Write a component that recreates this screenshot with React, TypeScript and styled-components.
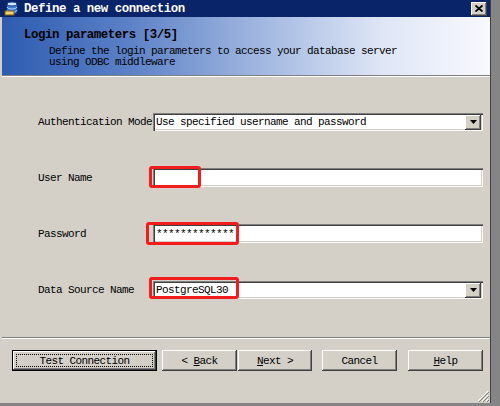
import React from "react";
import styled, { createGlobalStyle, css } from "styled-components";

const GlobalStyle = createGlobalStyle`
  html, body {
    margin: 0;
    padding: 0;
    background: #858585;
  }
  body {
    font-family: "Liberation Mono", "DejaVu Sans Mono", monospace;
  }
`;

// classic 6px-per-character dialog text
const dialogText = css`
  font-size: 11px;
  letter-spacing: -0.6px;
`;

const Screen = styled.div`
  width: 500px;
  height: 406px;
  display: flex;
  background: #858585;
  overflow: hidden;
`;

const Window = styled.div`
  width: 491px;
  height: 403px;
  display: flex;
  flex-direction: column;
  background: #d4d0c8;
  border-right: 1px solid #404040;
  box-sizing: border-box;
`;

const TitleBar = styled.header`
  height: 17px;
  flex: none;
  display: flex;
  align-items: center;
  padding: 0 2px 0 4px;
  background: #0a246a;
  gap: 3px;
`;

const TitleText = styled.span`
  flex: 1;
  color: #fff;
  font-weight: bold;
  font-size: 12.4px;
  letter-spacing: -0.45px;
  white-space: pre;
  padding-left: 1px;
`;

const CloseButton = styled.div`
  width: 16px;
  height: 14px;
  margin-right: 1px;
  background: #d4d0c8;
  box-shadow: inset -1px -1px #404040, inset 1px 1px #fff, inset -2px -2px #808080;
  display: flex;
  align-items: center;
  justify-content: center;
`;

const Banner = styled.div`
  height: 59px;
  flex: none;
  margin-left: 2px;
  background: linear-gradient(
    to right,
    #2d5cb0 0%,
    #5a7fc6 25%,
    #a6bbe2 55%,
    #dfe6f6 78%,
    #f8f9fe 100%
  );
  border-bottom: 1px solid #808080;
  box-shadow: 0 1px 0 #fff;
  padding: 11px 0 0 22px;
  box-sizing: border-box;
  color: #000;
`;

const BannerTitle = styled.div`
  font-weight: bold;
  font-size: 12.4px;
  letter-spacing: -0.45px;
  line-height: 15px;
  white-space: pre;
`;

const BannerText = styled.div`
  ${dialogText}
  line-height: 11px;
  margin: 3px 0 0 25px;
  white-space: pre;
`;

const Form = styled.section`
  display: flex;
  flex-direction: column;
  gap: 37px;
  padding: 36px 0 0 38px;
  height: 260px;
  box-sizing: border-box;
  flex: none;
`;

const Row = styled.div`
  display: flex;
  align-items: center;
  height: 19px;
`;

const Label = styled.label`
  width: 115px;
  ${dialogText}
  white-space: pre;
  flex: none;
`;

const sunken = css`
  background: #fff;
  box-shadow: inset 1px 1px #808080, inset 2px 2px #404040, inset -1px -1px #fff,
    inset -2px -2px #d4d0c8;
`;

const Field = styled.div<{ $height: number }>`
  position: relative;
  width: 330px;
  height: ${(p) => p.$height}px;
  ${sunken}
  display: flex;
  align-items: center;
  padding: 0 2px 0 3px;
  box-sizing: border-box;
  ${dialogText}
  white-space: pre;
`;

const FieldValue = styled.span`
  flex: 1;
`;

const DropButton = styled.div`
  width: 16px;
  height: 15px;
  margin-top: 1px;
  background: #d4d0c8;
  box-shadow: inset -1px -1px #404040, inset 1px 1px #fff, inset -2px -2px #808080;
  display: flex;
  align-items: center;
  justify-content: center;
`;

const Highlight = styled.div<{ $left: number; $top: number; $w: number; $h: number }>`
  position: absolute;
  left: ${(p) => p.$left}px;
  top: ${(p) => p.$top}px;
  width: ${(p) => p.$w}px;
  height: ${(p) => p.$h}px;
  border: 3px solid #f21c1c;
  border-radius: 3px;
  box-sizing: border-box;
  pointer-events: none;
`;

const Separator = styled.div`
  height: 1px;
  margin: 1px 0 0 2px;
  background: #808080;
  border-bottom: 1px solid #fff;
  flex: none;
`;

const ButtonRow = styled.div`
  display: flex;
  padding: 11px 0 0 12px;
`;

const Button = styled.button<{ $w: number; $gap?: number; $default?: boolean }>`
  width: ${(p) => p.$w}px;
  height: 21px;
  margin-left: ${(p) => p.$gap ?? 0}px;
  padding: 0;
  border: none;
  background: #d4d0c8;
  font-family: "Liberation Mono", "DejaVu Sans Mono", monospace;
  ${dialogText}
  color: #000;
  position: relative;
  box-shadow: inset -1px -1px #404040, inset 1px 1px #fff, inset -2px -2px #808080;
  ${(p) =>
    p.$default &&
    css`
      box-shadow: inset 0 0 0 1px #000, inset -2px -2px #404040, inset 2px 2px #fff,
        inset -3px -3px #808080;
      &::after {
        content: "";
        position: absolute;
        inset: 4px;
        border: 1px dotted #000;
      }
    `}
`;

const Key = styled.span`
  text-decoration: underline;
`;

const Grip = styled.div`
  flex: 1;
  display: flex;
  justify-content: flex-end;
  align-items: flex-end;
  padding: 0 1px 1px 0;
`;

const DbIcon = () => (
  <svg width="16" height="15" viewBox="0 0 16 15">
    <path d="M3 3 v8 a5 2 0 0 0 10 0 v-8" fill="#3d7fd6" stroke="#1b3f86" />
    <ellipse cx="8" cy="3" rx="5" ry="2" fill="#cfe6ff" stroke="#1b3f86" />
    <path d="M3 6 a5 2 0 0 0 10 0" fill="none" stroke="#9fd0ff" />
    <path d="M3 9 a5 2 0 0 0 10 0" fill="none" stroke="#9fd0ff" />
    <rect x="1" y="10" width="9" height="4" fill="#f4d36b" stroke="#7a5a12" />
  </svg>
);

const CloseGlyph = () => (
  <svg width="8" height="7" viewBox="0 0 8 7">
    <path d="M0.5 0.5 L7.5 6.5 M7.5 0.5 L0.5 6.5" stroke="#000" strokeWidth="1.8" />
  </svg>
);

const Arrow = () => (
  <svg width="7" height="4" viewBox="0 0 7 4">
    <path d="M0 0 H7 L3.5 4 Z" fill="#000" />
  </svg>
);

const GripGlyph = () => (
  <svg width="12" height="12" viewBox="0 0 12 12">
    <path d="M11 1 L1 11 M11 5 L5 11 M11 9 L9 11" stroke="#fff" strokeWidth="1" />
    <path d="M12 2 L2 12 M12 6 L6 12 M12 10 L10 12" stroke="#808080" strokeWidth="1" />
  </svg>
);

export default function App() {
  return (
    <Screen>
      <GlobalStyle />
      <Window>
        <TitleBar>
          <DbIcon />
          <TitleText>Define a new connection</TitleText>
          <CloseButton>
            <CloseGlyph />
          </CloseButton>
        </TitleBar>

        <Banner>
          <BannerTitle>Login parameters [3/5]</BannerTitle>
          <BannerText>
            Define the login parameters to access your database server
            {"\n"}using ODBC middleware
          </BannerText>
        </Banner>

        <Form>
          <Row>
            <Label>Authentication Mode</Label>
            <Field $height={18}>
              <FieldValue>Use specified username and password</FieldValue>
              <DropButton>
                <Arrow />
              </DropButton>
            </Field>
          </Row>
          <Row>
            <Label>User Name</Label>
            <Field $height={19}>
              <FieldValue />
              <Highlight $left={-4} $top={-2} $w={52} $h={22} />
            </Field>
          </Row>
          <Row>
            <Label>Password</Label>
            <Field $height={19}>
              <FieldValue>*************</FieldValue>
              <Highlight $left={-7} $top={-2} $w={93} $h={23} />
            </Field>
          </Row>
          <Row>
            <Label>Data Source Name</Label>
            <Field $height={18}>
              <FieldValue>PostgreSQL30</FieldValue>
              <DropButton>
                <Arrow />
              </DropButton>
              <Highlight $left={-4} $top={-4} $w={90} $h={22} />
            </Field>
          </Row>
        </Form>

        <Separator />

        <ButtonRow>
          <Button $w={145} $default>
            Test Connection
          </Button>
          <Button $w={75} $gap={5}>
            {"< "}
            <Key>B</Key>ack
          </Button>
          <Button $w={74} $gap={1}>
            <Key>N</Key>ext {">"}
          </Button>
          <Button $w={75} $gap={10}>
            Cancel
          </Button>
          <Button $w={75} $gap={11}>
            <Key>H</Key>elp
          </Button>
        </ButtonRow>

        <Grip>
          <GripGlyph />
        </Grip>
      </Window>
    </Screen>
  );
}
